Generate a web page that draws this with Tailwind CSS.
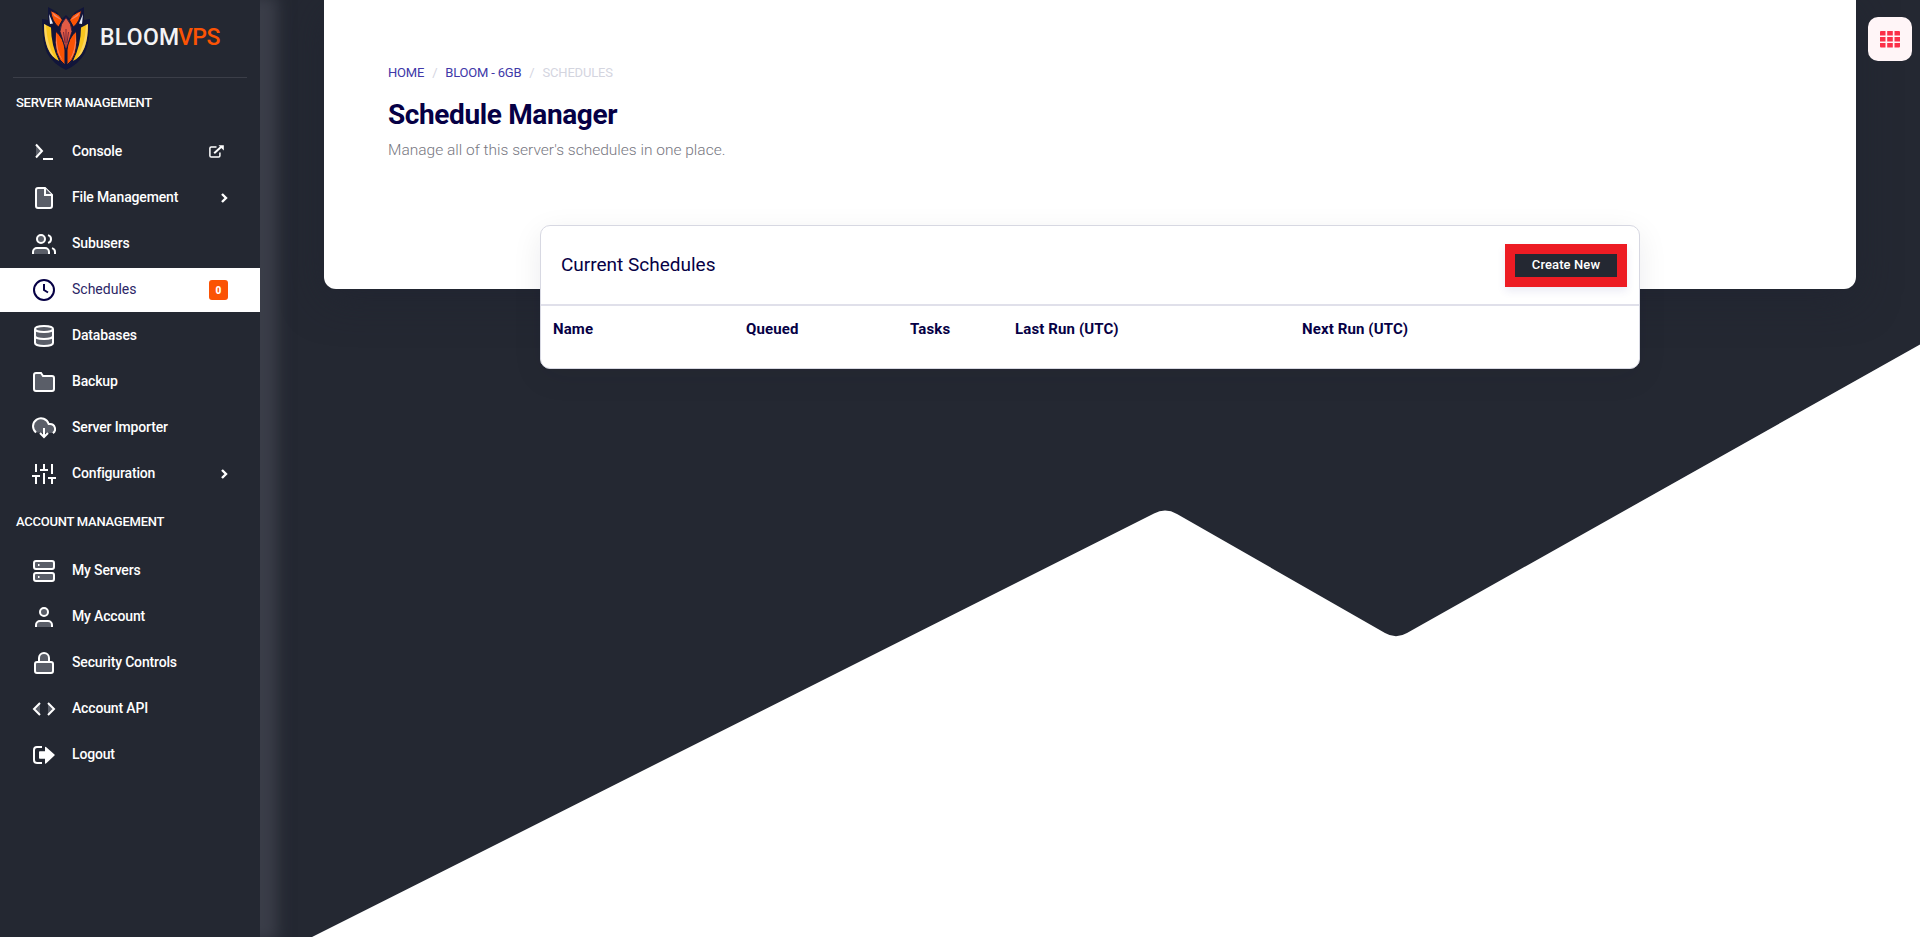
<!DOCTYPE html>
<html lang="en">
<head>
<meta charset="utf-8">
<title>Schedule Manager</title>
<script src="https://cdn.jsdelivr.net/npm/@tailwindcss/browser@4"></script>
</head>
<body class="relative flex h-[937px] w-[1920px] overflow-hidden bg-[#242832] font-['Roboto',sans-serif] text-[#060045]">
<svg class="absolute inset-0" width="1920" height="937" viewBox="0 0 1920 937"><path fill="#fff" d="M312 937 1154 513.500Q1165.500 507.500 1177 514L1385 633Q1396 639.500 1407 633L1920 344.500V937Z"/></svg>

<aside class="relative z-10 flex h-full w-[260px] shrink-0 flex-col bg-[#242832] text-[14px] font-medium tracking-[-0.16px] text-white shadow-[13px_0_14px_4px_#3b3e49]">
  <div class="mx-[13px] flex h-[78px] shrink-0 border-b border-[#3b3e48] pl-[28px]">
    <svg class="shrink-0" width="50" height="76" viewBox="41 0 50 76">
      <path fill="#11153a" d="M48 7 57 12 62 19 66 15 70 19 75 12 84 7V20L90 19Q90 42 85 53 79 64 66 70 53 64 47 53 42 42 42 19L48 20Z"/>
      <path fill="#f9c51d" d="M44 24 51 27.500Q51 45 59 61 44 54 44 24ZM88 24 81 27.500Q81 45 73 61 88 54 88 24Z"/>
      <path fill="#ffe08a" d="M44 24 46 25Q47 45 55 58 44 50 44 24ZM88 24 86 25Q85 45 77 58 88 50 88 24Z" opacity=".6"/>
      <path fill="#e9edf5" d="M49 14 53 23.500 50 24ZM83 14 79 23.500 82 24Z"/>
      <g stroke="#11153a" stroke-width="1">
        <path fill="#fb5304" d="M50.500 10.500Q60 14 62.500 20L58.500 27Q52 22 50.500 10.500ZM81.500 10.500Q72 14 69.500 20L73.500 27Q80 22 81.500 10.500Z"/>
        <path fill="#fb5304" d="M55.500 31Q64 38 65 50V65Q53 57 55.500 31ZM76.500 31Q68 38 67 50V65Q79 57 76.500 31Z"/>
      </g>
      <path fill="#f4876a" d="M56.500 33Q56 50 63 61 54 51 56.500 33ZM75.500 33Q76 50 69 61 78 51 75.500 33ZM52 12 60 18.500 61 20 54 16ZM80 12 72 18.500 71 20 78 16Z"/>
      <path fill="#e25b45" stroke="#11153a" stroke-width=".8" d="M66 17.500Q60 24 60 31.500L66 50 72 31.500Q72 24 66 17.500Z"/>
      <path stroke="#6d2038" fill="none" stroke-width=".9" d="M66 29V47M63.500 32 65 43M68.500 32 67 43"/>
    </svg>
    <div class="mt-[21px] ml-[9px] flex h-[34px] items-center text-[23px] leading-[34px] font-medium"><span class="w-[78px] whitespace-nowrap tracking-[0.3px] text-[#f4f4f6]">BLOOM</span><span class="whitespace-nowrap tracking-[-0.5px] text-[#fb5304]">VPS</span></div>
  </div>
  <h2 class="flex h-[50px] shrink-0 items-center pl-4 text-[13px] tracking-[-0.25px]">SERVER MANAGEMENT</h2>
  <nav class="mt-[2px] flex flex-col gap-[2px]">
    <a class="flex h-11 items-center pl-8 pr-8"><svg class="mr-4" width="24" height="24" viewBox="0 0 24 24" fill="none" stroke="#fff" stroke-width="2"><path fill="#5a5e68" d="m4 17.500 6-6.500-6-6.500"/><path d="M11 19h10"/></svg><span class="pb-[2px]">Console</span>
      <svg class="mb-px ml-auto mr-1" width="15" height="13" viewBox="0 0 15 13" fill="none" stroke="#fff" stroke-width="1.500"><path d="M7.500 2H2.200Q.9 2 .9 3.300v7.400q0 1.300 1.300 1.300h7.400q1.300 0 1.300-1.300V7.500"/><path d="M5.200 8.200 12 2" stroke-width="2"/><path d="M9.500.2h5.300v5.300Z" fill="#fff" stroke="none"/></svg></a>
    <a class="flex h-11 items-center pl-8 pr-8"><svg class="mr-4" width="24" height="24" viewBox="0 0 24 24" fill="#5a5e68" stroke="#fff" stroke-width="2"><path d="M13 2H6a2 2 0 0 0-2 2v16a2 2 0 0 0 2 2h12a2 2 0 0 0 2-2V9Z"/><path d="M13 2v7h7"/></svg><span class="pb-[2px]">File Management</span>
      <svg class="ml-auto" width="7" height="10" viewBox="0 0 7 10" fill="none" stroke="#fff" stroke-width="2.400"><path d="m1 1 4 4-4 4"/></svg></a>
    <a class="flex h-11 items-center pl-8 pr-8"><svg class="mr-4" width="24" height="24" viewBox="0 0 24 24" fill="#5a5e68" stroke="#fff" stroke-width="2"><path d="M17 22v-2a4 4 0 0 0-4-4H5a4 4 0 0 0-4 4v2"/><circle cx="9" cy="7" r="4"/><path fill="none" d="M23 22v-2a4 4 0 0 0-3-3.870M16 3.130a4 4 0 0 1 0 7.750"/></svg><span class="pb-[2px]">Subusers</span></a>
    <a class="flex h-11 items-center bg-white pl-8 pr-8 font-normal tracking-normal text-[#2c2666]"><svg class="mr-4" width="24" height="24" viewBox="0 0 24 24" fill="none" stroke="#060045" stroke-width="2"><circle cx="12" cy="12" r="10"/><path d="M12 6v6l4 2.500"/></svg><span class="pb-[2px]">Schedules</span>
      <span class="ml-auto flex h-5 w-[19px] items-center justify-center rounded-[3px] bg-[#fb5304] text-[10px] font-black text-white">0</span></a>
    <a class="flex h-11 items-center pl-8 pr-8"><svg class="mr-4" width="24" height="24" viewBox="0 0 24 24" fill="#5a5e68" stroke="#fff" stroke-width="2"><path d="M3 5v14c0 1.660 4 3 9 3s9-1.340 9-3V5"/><ellipse cx="12" cy="5" rx="9" ry="3"/><path d="M21 12c0 1.660-4 3-9 3s-9-1.340-9-3"/></svg><span class="pb-[2px]">Databases</span></a>
    <a class="flex h-11 items-center pl-8 pr-8"><svg class="mr-4" width="24" height="24" viewBox="0 0 24 24" fill="#5a5e68" stroke="#fff" stroke-width="2"><path d="M22 19a2 2 0 0 1-2 2H4a2 2 0 0 1-2-2V5a2 2 0 0 1 2-2h5l2 3h9a2 2 0 0 1 2 2Z"/></svg><span class="pb-[2px]">Backup</span></a>
    <a class="flex h-11 items-center pl-8 pr-8"><svg class="mr-4" width="24" height="24" viewBox="0 0 24 24" fill="#5a5e68" stroke="#fff" stroke-width="2"><path d="M4 16.500A8 8 0 1 1 16.700 8H18a5 5 0 0 1 2.900 9.100"/><path fill="none" d="m8 17 4 4 4-4M12 12v9"/></svg><span class="pb-[2px]">Server Importer</span></a>
    <a class="flex h-11 items-center pl-8 pr-8"><svg class="mr-4" width="24" height="24" viewBox="0 0 24 24" fill="none" stroke="#fff" stroke-width="2"><path d="M4 22v-8M4 10V2M12 22V11M12 8V2M20 22v-6M20 12V2M0 14h8M8 8h8M16 16h8"/></svg><span class="pb-[2px]">Configuration</span>
      <svg class="ml-auto" width="7" height="10" viewBox="0 0 7 10" fill="none" stroke="#fff" stroke-width="2.400"><path d="m1 1 4 4-4 4"/></svg></a>
  </nav>
  <h2 class="mt-px flex h-[50px] shrink-0 items-center pl-4 text-[13px] tracking-[-0.25px]">ACCOUNT MANAGEMENT</h2>
  <nav class="mt-[2px] flex flex-col gap-[2px]">
    <a class="flex h-11 items-center pl-8"><svg class="mr-4" width="24" height="24" viewBox="0 0 24 24" fill="#5a5e68" stroke="#fff" stroke-width="2"><rect x="2" y="2" width="20" height="8" rx="2"/><rect x="2" y="14" width="20" height="8" rx="2"/><path d="M6 6h1.500M6 18h1.500"/></svg><span class="pb-[2px]">My Servers</span></a>
    <a class="flex h-11 items-center pl-8"><svg class="mr-4" width="24" height="24" viewBox="0 0 24 24" fill="#5a5e68" stroke="#fff" stroke-width="2"><path d="M20 22v-2a4 4 0 0 0-4-4H8a4 4 0 0 0-4 4v2"/><circle cx="12" cy="7" r="4"/></svg><span class="pb-[2px]">My Account</span></a>
    <a class="flex h-11 items-center pl-8"><svg class="mr-4" width="24" height="24" viewBox="0 0 24 24" fill="#5a5e68" stroke="#fff" stroke-width="2"><path d="M7 11V7a5 5 0 0 1 10 0v4"/><rect x="3" y="11" width="18" height="11" rx="2"/></svg><span class="pb-[2px]">Security Controls</span></a>
    <a class="flex h-11 items-center pl-8"><svg class="mr-4" width="24" height="24" viewBox="0 0 24 24" fill="#5a5e68" stroke="#fff" stroke-width="2"><path d="m16 18 6-6-6-6M8 6l-6 6 6 6"/></svg><span class="pb-[2px]">Account API</span></a>
    <a class="flex h-11 items-center pl-8"><svg class="mr-4" width="24" height="24" viewBox="0 0 24 24" fill="none" stroke="#fff" stroke-width="2"><path d="M10 4H5Q2 4 2 7v10q0 3 3 3h5"/><path fill="#fff" stroke="none" d="M7 9q0-.8.8-.8H13V4.500q0-1.300 1-.5l8.500 7.600q.5.500 0 1L14 20.500q-1 .8-1-.5v-4.200H7.800q-.8 0-.8-.8Z"/></svg><span class="pb-[2px]">Logout</span></a>
  </nav>
</aside>

<main class="relative min-w-0 flex-1 pl-16">
  <header class="h-[289px] w-[1532px] rounded-b-xl bg-white pl-16 pt-[63px] shadow-[0_10px_40px_rgba(31,35,48,0.6)]">
    <nav class="flex h-5 items-center text-[13px] tracking-[-0.2px] text-[#d4d5df]"><span class="text-[#4038a8]">HOME</span><span class="mx-2">/</span><span class="text-[#4038a8]">BLOOM - 6GB</span><span class="mx-2">/</span><span>SCHEDULES</span></nav>
    <h1 class="mt-[15px] text-[28px] leading-[34px] font-bold tracking-[-0.38px]">Schedule Manager</h1>
    <p class="mt-[6px] text-[15.500px] leading-6 font-light text-[#777781]">Manage all of this server's schedules in one place.</p>
  </header>
  <section class="absolute top-[225px] left-[280px] h-[144px] w-[1100px] rounded-[10px] border border-[#d7d8e2] bg-white shadow-[0_8px_30px_rgba(20,24,34,0.08)]">
    <div class="flex h-[80px] items-center justify-between border-b-2 border-[#e0e0ea] pr-3 pl-5">
      <h2 class="text-[19px] font-normal">Current Schedules</h2>
      <button class="h-[43px] w-[122px] border-[10px] border-[#ed1c24] bg-[#242832] pb-[2px] text-[13px] leading-[21px] font-medium tracking-[0.1px] text-white shadow-[0_4px_8px_rgba(60,60,160,0.1)]">Create New</button>
    </div>
    <div class="grid h-[46px] grid-cols-[193px_164px_105px_287px_1fr] items-center pl-3 text-[15px] font-bold tracking-[0.12px]"><span>Name</span><span>Queued</span><span>Tasks</span><span>Last Run (UTC)</span><span>Next Run (UTC)</span></div>
  </section>
  <button class="absolute top-[17px] right-2 flex h-11 w-11 items-center justify-center rounded-[10px] bg-[#fff5f7]">
    <svg width="20" height="17" viewBox="0 0 20 17" fill="#fb3048"><path d="M1 0h4.500v4.500H0V1q0-1 1-1ZM7.200 0h5.600v4.500H7.200ZM14.500 0H19q1 0 1 1v3.500h-5.500ZM0 6h5.500v4.500H0ZM7.200 6h5.600v4.500H7.200ZM14.500 6H20v4.500h-5.500ZM0 12h5.500v4.500H1q-1 0-1-1ZM7.200 12h5.600v4.500H7.200ZM14.500 12H20v3.500q0 1-1 1h-4.500Z"/></svg>
  </button>
</main>
</body>
</html>
